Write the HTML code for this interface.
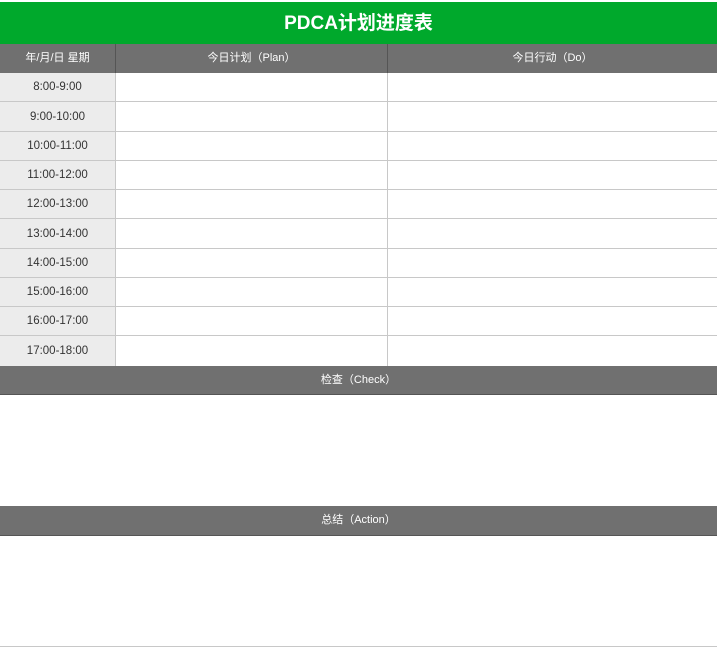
<!DOCTYPE html>
<html><head><meta charset="utf-8"><style>
*{margin:0;padding:0;box-sizing:border-box}
body{width:717px;height:648px;background:#fff;position:relative;overflow:hidden;font-family:"Liberation Sans","Noto Sans CJK SC",sans-serif}
.a{position:absolute}
.title{left:0;top:2px;width:717px;height:42px;background:#00a92c;color:#fff;font-size:19px;font-weight:bold;text-align:center;line-height:44px}
.hd{background:#707070;color:#fff;font-size:11px;text-align:center;height:29px;line-height:29px}
.r{position:absolute;left:0;width:717px;display:flex;border-bottom:1px solid #c8c8c8}
.r div{border-right:1px solid #c8c8c8;height:100%}
.r .t{width:116px;background:#ececec;font-size:11.5px;color:#333;text-align:center;display:flex;align-items:center;justify-content:center}
.r .p{width:272px}
</style></head><body>
<div class="a title">PDCA计划进度表</div>
<div class="a hd" style="left:0;top:44px;width:116px;border-right:1px solid #555">年/月/日 星期</div>
<div class="a hd" style="left:116px;top:44px;width:272px;border-right:1px solid #555">今日计划（Plan）</div>
<div class="a hd" style="left:388px;top:44px;width:329px">今日行动（Do）</div>
<div class="r" style="top:73px;height:29px"><div class="t">8:00-9:00</div><div class="p"></div></div>
<div class="r" style="top:102px;height:30px"><div class="t">9:00-10:00</div><div class="p"></div></div>
<div class="r" style="top:132px;height:29px"><div class="t">10:00-11:00</div><div class="p"></div></div>
<div class="r" style="top:161px;height:29px"><div class="t">11:00-12:00</div><div class="p"></div></div>
<div class="r" style="top:190px;height:29px"><div class="t">12:00-13:00</div><div class="p"></div></div>
<div class="r" style="top:219px;height:30px"><div class="t">13:00-14:00</div><div class="p"></div></div>
<div class="r" style="top:249px;height:29px"><div class="t">14:00-15:00</div><div class="p"></div></div>
<div class="r" style="top:278px;height:29px"><div class="t">15:00-16:00</div><div class="p"></div></div>
<div class="r" style="top:307px;height:29px"><div class="t">16:00-17:00</div><div class="p"></div></div>
<div class="r" style="top:336px;height:30px;border-bottom:none"><div class="t">17:00-18:00</div><div class="p"></div></div>
<div class="a hd" style="left:0;top:366px;width:717px;border-bottom:1px solid #555">检查（Check）</div>
<div class="a hd" style="left:0;top:506px;width:717px;height:30px;border-bottom:1px solid #555">总结（Action）</div>
<div class="a" style="left:0;top:646px;width:717px;height:1px;background:#c8c8c8"></div>
</body></html>
